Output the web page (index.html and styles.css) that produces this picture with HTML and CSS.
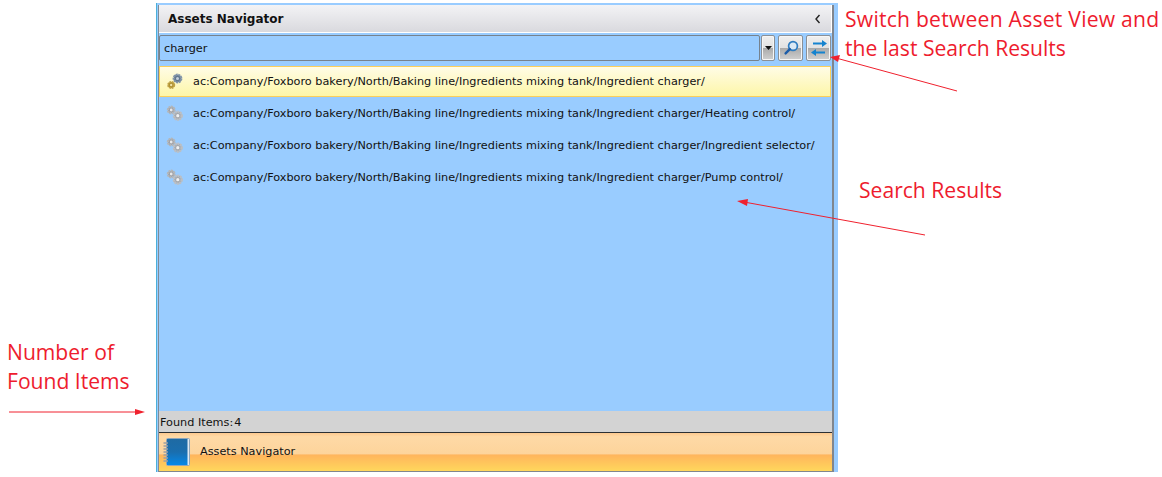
FILE: index.html
```html
<!DOCTYPE html>
<html lang="en">
<head>
<meta charset="utf-8">
<title>Assets Navigator</title>
<link rel="stylesheet" href="styles.css">
</head>
<body>
<div class="page">
  <svg class="defs" width="0" height="0" aria-hidden="true">
    <defs>
      <symbol id="gears-grey" viewBox="0 0 20 20">
        <circle cx="5.2" cy="7" r="3.3" fill="#9b9da2" stroke="#b4b6b9" stroke-width="2.2" stroke-dasharray="1.9 0.6"/>
        <circle cx="5.2" cy="7" r="1.4" fill="#e6e7e9"/>
        <circle cx="11.8" cy="12.7" r="3.9" fill="#a3a7ad" stroke="#bcbfc3" stroke-width="2.4" stroke-dasharray="1.9 0.6"/>
        <circle cx="11.8" cy="12.7" r="1.6" fill="#eef0f2"/>
      </symbol>
      <symbol id="gears-active" viewBox="0 0 20 20">
        <circle cx="11.5" cy="6.5" r="3.8" fill="#62778f" stroke="#8295aa" stroke-width="2.2" stroke-dasharray="2 0.6"/>
        <circle cx="11.5" cy="6.5" r="1.5" fill="#c4cfdb"/>
        <circle cx="5.2" cy="13" r="3" fill="#a98a2a" stroke="#c0a244" stroke-width="2" stroke-dasharray="1.8 0.6"/>
        <circle cx="5.2" cy="13" r="1.2" fill="#efe2a8"/>
      </symbol>
      <linearGradient id="bookfill" x1="0" y1="0" x2="0" y2="1">
        <stop offset="0" stop-color="#1f6aa3"/>
        <stop offset="0.5" stop-color="#1a6eae"/>
        <stop offset="1" stop-color="#0588e8"/>
      </linearGradient>
    </defs>
  </svg>

  <section class="panel">
    <div class="inner">
      <header class="titlebar">
        <span class="title">Assets Navigator</span>
        <svg class="collapse" width="8" height="10" viewBox="0 0 8 10"><path d="M5.5 1 L2 5 L5.5 9" fill="none" stroke="#222" stroke-width="1.4"/></svg>
      </header>
      <div class="searchrow">
        <div class="searchbox">charger</div>
        <div class="btn drop"><svg width="7" height="4" viewBox="0 0 7 4"><path d="M0 0H7L3.5 4Z" fill="#111"/></svg></div>
        <div class="btn square">
          <svg width="18" height="18" viewBox="0 0 18 18"><circle cx="11" cy="7" r="4.4" fill="#dbe9f5" stroke="#2f7cc0" stroke-width="1.7"/><path d="M7.8 10.2 L3.6 14.4" stroke="#1c5ca8" stroke-width="2.4" stroke-linecap="round"/></svg>
        </div>
        <div class="btn square">
          <svg width="20" height="18" viewBox="0 0 20 18"><path d="M4 3.5H13V1L18 4.5L13 8V5.5H4Z" fill="#1583cf"/><path d="M16 12.5H7V10L2 13.5L7 17V14.5H16Z" fill="#1583cf"/></svg>
        </div>
      </div>
      <ul class="results">
        <li class="row selected">
          <svg class="gears" width="20" height="20"><use href="#gears-active"/></svg>
          <span>ac:Company/Foxboro bakery/North/Baking line/Ingredients mixing tank/Ingredient charger/</span>
        </li>
        <li class="row">
          <svg class="gears" width="20" height="20"><use href="#gears-grey"/></svg>
          <span>ac:Company/Foxboro bakery/North/Baking line/Ingredients mixing tank/Ingredient charger/Heating control/</span>
        </li>
        <li class="row">
          <svg class="gears" width="20" height="20"><use href="#gears-grey"/></svg>
          <span>ac:Company/Foxboro bakery/North/Baking line/Ingredients mixing tank/Ingredient charger/Ingredient selector/</span>
        </li>
        <li class="row">
          <svg class="gears" width="20" height="20"><use href="#gears-grey"/></svg>
          <span>ac:Company/Foxboro bakery/North/Baking line/Ingredients mixing tank/Ingredient charger/Pump control/</span>
        </li>
      </ul>
      <div class="status"><span>Found Items:</span><span>4</span></div>
      <footer class="tab">
        <svg class="book" width="28" height="30" viewBox="0 0 28 30"><rect x="4.5" y="1.5" width="23" height="27" rx="1" fill="#dfe9f2" stroke="#8fa5b8"/><rect x="5" y="2" width="20.5" height="26" fill="url(#bookfill)"/><path d="M1.5 6H6M1.5 9H6M1.5 12H6M1.5 15H6M1.5 18H6M1.5 21H6M1.5 24H6" stroke="#9a9ea2" stroke-width="1.3"/></svg>
        <span class="tab-label">Assets Navigator</span>
      </footer>
    </div>
  </section>

  <p class="note note-switch"><span class="wide">Switch between Asset View and</span><br>the last Search Results</p>
  <p class="note note-results">Search Results</p>
  <p class="note note-found">Number of<br>Found Items</p>

  <svg class="arrows" width="1162" height="477" viewBox="0 0 1162 477">
    <g fill="none" stroke="#f0212e" stroke-width="1"><path d="M957 91 L836 58"/><path d="M925 235 L744 202"/><path d="M9 412 L138 412"/></g>
    <g fill="#f0212e"><path d="M830 57 L840 55 L838 62Z"/><path d="M737 201 L748 199 L747 206Z"/><path d="M145 412 L135 409 L135 415Z"/></g>
  </svg>
</div>
</body>
</html>
```

FILE: styles.css
```css
* { box-sizing: border-box; }
html, body { margin: 0; padding: 0; background: #fff; }
.page {
  position: relative;
  width: 1162px;
  height: 477px;
  padding: 3px 0 0 156px;
  overflow: hidden;
  font-family: "DejaVu Sans", sans-serif;
  font-size: 11.25px;
  color: #111;
}
.defs { position: absolute; }
.panel {
  width: 682px;
  height: 469px;
  background: #99ccff;
  border-left: 1px solid #4bb0d8;
  padding: 2px 4px 0 1px;
}
.inner {
  display: flex;
  flex-direction: column;
  height: 100%;
  border-left: 1px solid #7f8c96;
  border-right: 2px solid #80868e;
  border-bottom: 1px solid #80868e;
}
.titlebar {
  height: 28px;
  flex: none;
  display: flex;
  align-items: center;
  justify-content: space-between;
  padding: 0 9px 0 9px;
  background: linear-gradient(#f3f3f5, #d9d9de);
  border-bottom: 1px solid #fff;
  border-right: 1px solid #fff;
}
.title { font-weight: bold; font-size: 12px; }
.collapse { display: block; }
.searchrow {
  display: flex;
  height: 27px;
  flex: none;
  margin-top: 2px;
}
.searchbox {
  flex: none;
  width: 601px;
  height: 26px;
  border: 1px solid #76828e;
  border-radius: 2px;
  display: flex;
  align-items: center;
  padding-left: 4px;
}
.btn {
  flex: none;
  display: flex;
  align-items: center;
  justify-content: center;
  height: 26px;
  border: 1px solid #8b9096;
  box-shadow: inset 0 0 0 1px #f6f6f6;
  background: linear-gradient(#efefef 0, #e2e2e2 48%, #a9a9a9 50%, #d0d0d0 100%);
  border-radius: 2px;
}
.drop { width: 14px; margin: 0 3px 0 1px; }
.square { width: 25px; margin-right: 3px; }
.square:last-child { margin-right: 0; }
.results {
  list-style: none;
  margin: 0;
  padding: 4px 0 0;
  flex: 1;
  min-height: 0;
}
.row {
  width: 672px;
  height: 32px;
  display: flex;
  align-items: center;
  gap: 7px;
  padding-left: 7px;
  white-space: nowrap;
}
.selected {
  height: 31px;
  background: linear-gradient(#fffce6, #fdf6a8);
  border: 1px solid #fbcf5a;
  padding-left: 6px;
}
.gears { display: block; flex: none; }
.status {
  flex: none;
  height: 21px;
  background: #d3d3d3;
  display: flex;
  align-items: center;
  padding: 1px 0 0 1px;
  gap: 1px;
}
.tab {
  flex: none;
  height: 39px;
  display: flex;
  align-items: center;
  gap: 10px;
  padding-left: 3px;
  border-top: 1px solid #2b2f33;
  background: linear-gradient(#fdc98f 0, #fed9a6 10%, #fdd49b 56%, #ffb45c 57%, #ffd75c 100%);
}
.tab-label { margin-bottom: 2px; }
.book { display: block; flex: none; }
.note {
  position: absolute;
  margin: 0;
  font-family: "Open Sans", sans-serif;
  font-size: 21.1px;
  line-height: 29px;
  color: #ee1c2e;
  white-space: nowrap;
}
.wide { letter-spacing: 0.24px; }
.note-switch { left: 845px; top: 4px; }
.note-results { left: 859px; top: 175px; }
.note-found { left: 7px; top: 337px; }
.arrows { position: absolute; left: 0; top: 0; pointer-events: none; }
```
